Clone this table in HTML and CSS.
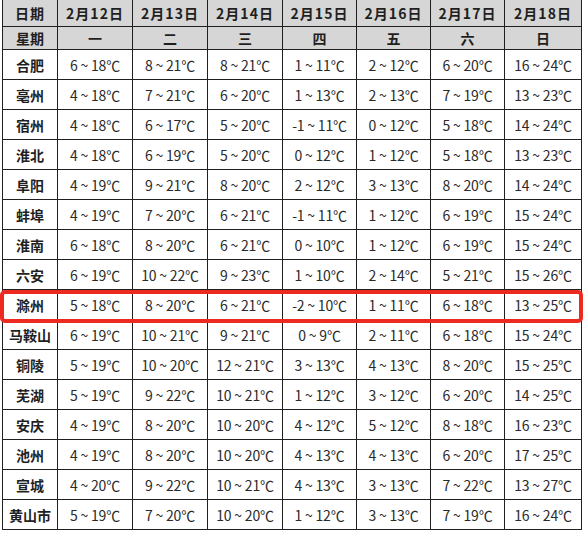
FILE: index.html
```html
<!DOCTYPE html>
<html lang="zh">
<head>
<meta charset="utf-8">
<link rel="stylesheet" href="styles.css">
</head>
<body>
<div class="wrap">
<table class="wx">
<colgroup>
<col class="c0"><col class="c1"><col class="c1"><col class="c1"><col class="c2"><col class="c2"><col class="c2"><col class="c3">
</colgroup>
<thead>
<tr class="h1"><th>日期</th><th>2月12日</th><th>2月13日</th><th>2月14日</th><th>2月15日</th><th>2月16日</th><th>2月17日</th><th>2月18日</th></tr>
<tr class="h2"><th>星期</th><th>一</th><th>二</th><th>三</th><th>四</th><th>五</th><th>六</th><th>日</th></tr>
</thead>
<tbody>
<tr><th>合肥</th><td>6 ~ 18℃</td><td>8 ~ 21℃</td><td>8 ~ 21℃</td><td>1 ~ 11℃</td><td>2 ~ 12℃</td><td>6 ~ 20℃</td><td>16 ~ 24℃</td></tr>
<tr><th>亳州</th><td>4 ~ 18℃</td><td>7 ~ 21℃</td><td>6 ~ 20℃</td><td>1 ~ 13℃</td><td>2 ~ 13℃</td><td>7 ~ 19℃</td><td>13 ~ 23℃</td></tr>
<tr><th>宿州</th><td>4 ~ 18℃</td><td>6 ~ 17℃</td><td>5 ~ 20℃</td><td>-1 ~ 11℃</td><td>0 ~ 12℃</td><td>5 ~ 18℃</td><td>14 ~ 24℃</td></tr>
<tr><th>淮北</th><td>4 ~ 18℃</td><td>6 ~ 19℃</td><td>5 ~ 20℃</td><td>0 ~ 12℃</td><td>1 ~ 12℃</td><td>5 ~ 18℃</td><td>13 ~ 23℃</td></tr>
<tr><th>阜阳</th><td>4 ~ 19℃</td><td>9 ~ 21℃</td><td>8 ~ 20℃</td><td>2 ~ 12℃</td><td>3 ~ 13℃</td><td>8 ~ 20℃</td><td>14 ~ 24℃</td></tr>
<tr><th>蚌埠</th><td>4 ~ 19℃</td><td>7 ~ 20℃</td><td>6 ~ 21℃</td><td>-1 ~ 11℃</td><td>1 ~ 12℃</td><td>6 ~ 19℃</td><td>15 ~ 24℃</td></tr>
<tr><th>淮南</th><td>6 ~ 18℃</td><td>8 ~ 20℃</td><td>6 ~ 21℃</td><td>0 ~ 10℃</td><td>1 ~ 12℃</td><td>6 ~ 19℃</td><td>15 ~ 24℃</td></tr>
<tr><th>六安</th><td>6 ~ 19℃</td><td>10 ~ 22℃</td><td>9 ~ 23℃</td><td>1 ~ 10℃</td><td>2 ~ 14℃</td><td>5 ~ 21℃</td><td>15 ~ 26℃</td></tr>
<tr class="hl"><th>滁州</th><td>5 ~ 18℃</td><td>8 ~ 20℃</td><td>6 ~ 21℃</td><td>-2 ~ 10℃</td><td>1 ~ 11℃</td><td>6 ~ 18℃</td><td>13 ~ 25℃</td></tr>
<tr><th>马鞍山</th><td>6 ~ 19℃</td><td>10 ~ 21℃</td><td>9 ~ 21℃</td><td>0 ~ 9℃</td><td>2 ~ 11℃</td><td>6 ~ 18℃</td><td>15 ~ 24℃</td></tr>
<tr><th>铜陵</th><td>5 ~ 19℃</td><td>10 ~ 20℃</td><td>12 ~ 21℃</td><td>3 ~ 13℃</td><td>4 ~ 13℃</td><td>8 ~ 20℃</td><td>15 ~ 25℃</td></tr>
<tr><th>芜湖</th><td>5 ~ 19℃</td><td>9 ~ 22℃</td><td>10 ~ 21℃</td><td>1 ~ 12℃</td><td>3 ~ 12℃</td><td>6 ~ 20℃</td><td>14 ~ 25℃</td></tr>
<tr><th>安庆</th><td>4 ~ 19℃</td><td>8 ~ 20℃</td><td>10 ~ 20℃</td><td>4 ~ 12℃</td><td>5 ~ 12℃</td><td>8 ~ 18℃</td><td>16 ~ 23℃</td></tr>
<tr><th>池州</th><td>4 ~ 19℃</td><td>8 ~ 20℃</td><td>10 ~ 20℃</td><td>4 ~ 13℃</td><td>4 ~ 13℃</td><td>6 ~ 20℃</td><td>17 ~ 25℃</td></tr>
<tr><th>宣城</th><td>4 ~ 20℃</td><td>9 ~ 22℃</td><td>10 ~ 21℃</td><td>4 ~ 13℃</td><td>3 ~ 13℃</td><td>7 ~ 22℃</td><td>13 ~ 27℃</td></tr>
<tr><th>黄山市</th><td>5 ~ 19℃</td><td>7 ~ 20℃</td><td>10 ~ 20℃</td><td>1 ~ 12℃</td><td>3 ~ 13℃</td><td>7 ~ 19℃</td><td>16 ~ 24℃</td></tr>
</tbody>
</table>
<div class="mark"></div>
</div>
</body>
</html>
```
FILE: styles.css
```css
html, body {
  margin: 0;
  padding: 0;
  background: #ffffff;
}
.wrap {
  position: relative;
  width: 583px;
  height: 534px;
  padding-left: 2px;
  box-sizing: border-box;
  overflow: hidden;
}
.wx {
  border-collapse: collapse;
  table-layout: fixed;
  width: 580px;
  font-family: "Noto Sans CJK SC", "Noto Sans", sans-serif;
  font-size: 14px;
  color: #1f1f1f;
}
.c0 { width: 55px; }
.c1 { width: 75px; }
.c2 { width: 74px; }
.c3 { width: 77px; }
.wx th, .wx td {
  border: 1px solid #202020;
  text-align: center;
  padding: 0;
  white-space: nowrap;
  line-height: 18px;
}
.wx thead th {
  background: #d6d6d6;
  font-weight: 700;
}
.h1 th {
  letter-spacing: 1px;
}
.wx tbody th {
  font-weight: 700;
}
.wx td {
  font-weight: 400;
  letter-spacing: -0.2px;
  color: #2a2a2a;
}
.h1 th {
  height: 26px;
  border-top: none;
}
.h2 th {
  height: 22px;
}
.wx tbody tr th, .wx tbody tr td {
  height: 29px;
}
.mark {
  position: absolute;
  left: 0;
  top: 290px;
  width: 583px;
  height: 33px;
  box-sizing: border-box;
  border: 4px solid #ec2a1f;
  border-radius: 5px;
}
```
